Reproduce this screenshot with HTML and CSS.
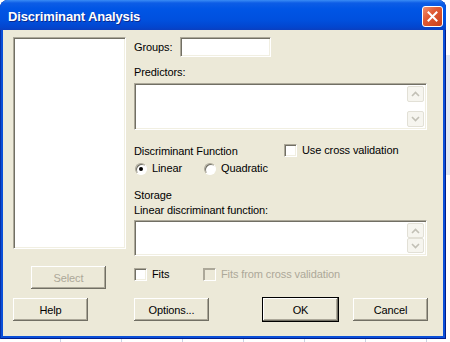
FILE: index.html
```html
<!DOCTYPE html>
<html lang="en">
<head>
    <meta charset="UTF-8">
    <title>Discriminant Analysis</title>
    <link rel="stylesheet" href="styles.css">
</head>
<body>
    <div class="window">
        <div class="titlebar">
            <span class="title">Discriminant Analysis</span>
            <span class="close">
                <svg width="11" height="11" viewBox="0 0 11 11"><path d="M1.5 1.5 L9.5 9.5 M9.5 1.5 L1.5 9.5" stroke="#fff" stroke-width="2" stroke-linecap="square"/></svg>
            </span>
        </div>
        <div class="client">
            <div class="main">
                <div class="listbox sunken"></div>
                <div class="fields">
                    <div class="groups-row">
                        <span class="groups-label">Groups:</span>
                        <div class="input sunken"></div>
                    </div>
                    <div class="text predictors-label">Predictors:</div>
                    <div class="textbox sunken predictors">
                        <div class="scroll">
                            <span class="arrow"><svg width="9" height="6" viewBox="0 0 9 6"><path d="M1 5 L4.5 1.5 L8 5" fill="none" stroke="#C2C0B6" stroke-width="1.6"/></svg></span>
                            <span class="arrow"><svg width="9" height="6" viewBox="0 0 9 6"><path d="M1 1 L4.5 4.5 L8 1" fill="none" stroke="#C2C0B6" stroke-width="1.6"/></svg></span>
                        </div>
                    </div>
                    <div class="func-row">
                        <span class="func-label">Discriminant Function</span>
                        <span class="check"><span class="box"></span>Use cross validation</span>
                    </div>
                    <div class="radio-row">
                        <span class="option first"><span class="radio on"></span>Linear</span>
                        <span class="option"><span class="radio"></span>Quadratic</span>
                    </div>
                    <div class="text storage">Storage</div>
                    <div class="text ldf-label">Linear discriminant function:</div>
                    <div class="textbox sunken ldf">
                        <div class="scroll">
                            <span class="arrow"><svg width="9" height="6" viewBox="0 0 9 6"><path d="M1 5 L4.5 1.5 L8 5" fill="none" stroke="#C2C0B6" stroke-width="1.6"/></svg></span>
                            <span class="arrow"><svg width="9" height="6" viewBox="0 0 9 6"><path d="M1 1 L4.5 4.5 L8 1" fill="none" stroke="#C2C0B6" stroke-width="1.6"/></svg></span>
                        </div>
                    </div>
                </div>
            </div>
            <div class="select-row">
                <button class="btn select" disabled>Select</button>
                <span class="check fits"><span class="box"></span>Fits</span>
                <span class="check disabled"><span class="box"></span>Fits from cross validation</span>
            </div>
            <div class="button-row">
                <button class="btn help">Help</button>
                <button class="btn options">Options...</button>
                <button class="btn ok">OK</button>
                <button class="btn cancel">Cancel</button>
            </div>
        </div>
    </div>
</body>
</html>
```

FILE: styles.css
```css
body {
    margin: 0;
    width: 450px;
    height: 342px;
    font-family: "Liberation Sans", Arial, sans-serif;
    font-size: 11px;
    letter-spacing: -0.1px;
    color: #000;
    background-color: #fff;
    background-image:
        linear-gradient(to right, transparent 59px, #c9d3e4 59px, #c9d3e4 60px, transparent 60px),
        linear-gradient(to bottom, #dfe7f5 0, #dfe7f5 100%);
    background-size: 61px 342px, 4px 120px;
    background-position: 1px 0, 446px 55px;
    background-repeat: repeat-x, no-repeat;
    overflow: hidden;
}

.window {
    width: 446px;
    height: 339px;
    background: #0a4fd8;
    border-radius: 8px 8px 0 0;
    box-shadow: inset 1px 0 #0831a8, inset -1px 0 #001d8c, inset 0 -1px #001d8c;
    display: flex;
    flex-direction: column;
}

.titlebar {
    height: 30px;
    flex: none;
    display: flex;
    align-items: center;
    justify-content: space-between;
    padding: 0 3px 0 8px;
    border-radius: 8px 8px 0 0;
    background: linear-gradient(to bottom, #3a8cf5 0, #0d5de6 3px, #0055e5 9px, #0050de 20px, #0346cf 27px, #0a3fc0 30px);
}

.title {
    color: #fff;
    font-weight: bold;
    font-size: 13px;
    letter-spacing: -0.15px;
    padding-top: 3px;
    text-shadow: 1px 1px #0a2a90;
}

.close {
    width: 19px;
    height: 19px;
    border: 1px solid #fff;
    border-radius: 3px;
    background: linear-gradient(135deg, #f09070 0, #e05a34 40%, #c9401c 100%);
    display: flex;
    align-items: center;
    justify-content: center;
    margin-top: 2px;
}

.client {
    margin: 0 3px 3px;
    flex: 1;
    background: #ece9d8;
    padding: 0 10px;
}

.sunken {
    background: #fff;
    border: 1px solid;
    border-color: #aca899 #fff #fff #aca899;
    box-shadow: inset 1px 1px #716f64, inset -1px -1px #f1efe2;
    box-sizing: border-box;
}

.main {
    display: flex;
    padding-top: 7px;
}

.listbox {
    width: 113px;
    height: 212px;
    flex: none;
}

.fields {
    margin-left: 8px;
    width: 293px;
    display: flex;
    flex-direction: column;
}

.text {
    line-height: 13px;
}

.groups-row {
    display: flex;
    align-items: center;
    height: 20px;
}

.groups-label {
    width: 46px;
}

.input {
    width: 91px;
    height: 20px;
}

.predictors-label {
    margin-top: 9px;
}

.textbox {
    display: flex;
    justify-content: flex-end;
    padding: 2px;
}

.predictors {
    margin-top: 4px;
    height: 47px;
}

.ldf {
    margin-top: 3px;
    height: 36px;
}

.scroll {
    width: 17px;
    display: flex;
    flex-direction: column;
    justify-content: space-between;
}

.arrow {
    height: 16px;
    box-sizing: border-box;
    border: 1px solid #e2e0d6;
    border-radius: 2px;
    background: #f6f5ef;
    display: flex;
    align-items: center;
    justify-content: center;
}

.func-row {
    margin-top: 14px;
    display: flex;
    align-items: center;
    height: 13px;
}

.func-label {
    width: 150px;
}

.check,
.option {
    display: flex;
    align-items: center;
    line-height: 13px;
}

.box {
    width: 13px;
    height: 13px;
    box-sizing: border-box;
    background: #fff;
    border: 1px solid;
    border-color: #aca899 #fff #fff #aca899;
    box-shadow: inset 1px 1px #716f64, inset -1px -1px #f1efe2;
    margin-right: 5px;
}

.radio-row {
    margin-top: 5px;
    display: flex;
    height: 13px;
}

.option.first {
    width: 69px;
}

.radio {
    width: 12px;
    height: 12px;
    box-sizing: border-box;
    border-radius: 50%;
    background: #fff;
    border: 1px solid;
    border-color: #aca899 #fff #fff #aca899;
    box-shadow: inset 1px 1px #716f64;
    margin: 0 5px 0 1px;
    display: flex;
    align-items: center;
    justify-content: center;
}

.radio.on::after {
    content: "";
    width: 4px;
    height: 4px;
    border-radius: 50%;
    background: #000;
}

.storage {
    margin-top: 14px;
}

.ldf-label {
    margin-top: 2px;
}

.select-row {
    margin-top: 10px;
    display: flex;
    align-items: flex-start;
    height: 23px;
}

.btn {
    width: 75px;
    height: 23px;
    padding: 0;
    font-family: inherit;
    font-size: 11px;
    letter-spacing: -0.1px;
    color: #000;
    background: #ece9d8;
    border: none;
    box-shadow: inset -1px -1px #716f64, inset 1px 1px #fff, inset -2px -2px #aca899;
}

.btn:disabled {
    color: #aca899;
}

.select {
    margin-left: 18px;
}

.fits {
    margin-left: 28px;
    margin-top: 2px;
    width: 69px;
}

.check.disabled {
    color: #aca899;
    margin-top: 2px;
}

.check.disabled .box {
    background: #ece9d8;
    box-shadow: inset 1px 1px #aca899;
}

.button-row {
    margin-top: 9px;
    display: flex;
}

.options {
    margin-left: 46px;
}

.ok {
    margin-left: 54px;
    box-shadow: 0 0 0 1px #000, inset -1px -1px #716f64, inset 1px 1px #fff, inset -2px -2px #aca899;
}

.cancel {
    margin-left: 15px;
}
```
